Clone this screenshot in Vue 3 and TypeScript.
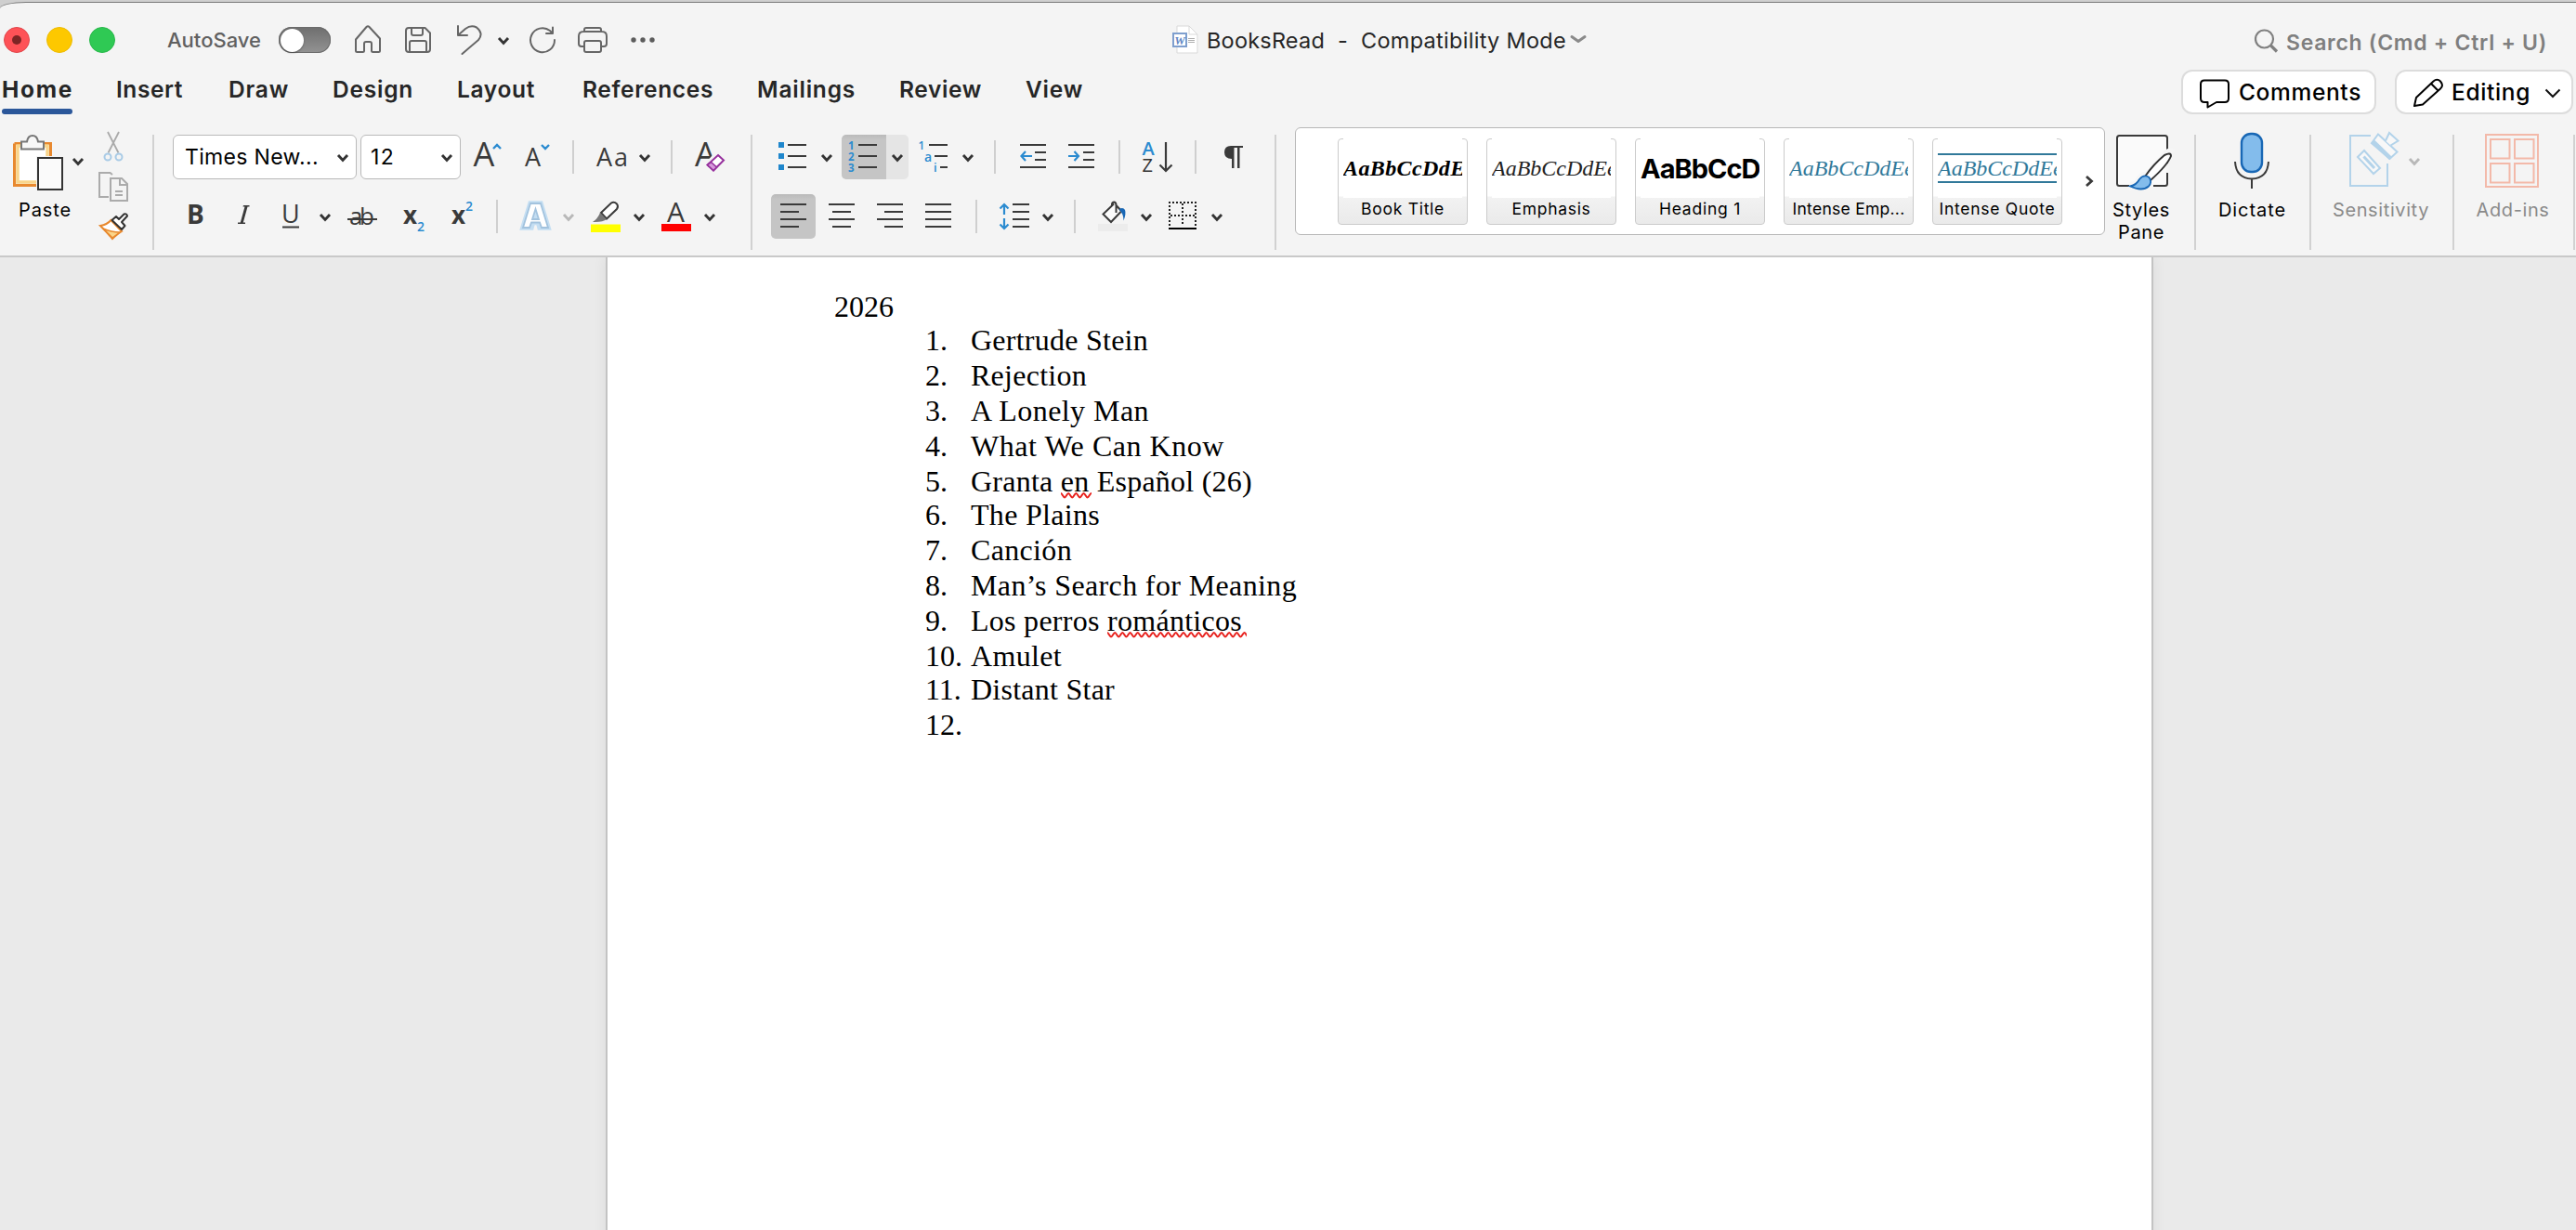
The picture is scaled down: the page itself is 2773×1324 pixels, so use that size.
<script setup lang="ts">
import { h, type FunctionalComponent, type Directive } from 'vue'

// Icon tile: all icons of one toolbar share a coordinate space, each tile shows a slice of it.
const Ic: FunctionalComponent<{ x: number; w: number; y?: number; t?: number }> = (p, { slots }) =>
  h(
    'svg',
    {
      width: p.w,
      height: p.t ?? 48,
      viewBox: `${p.x} ${p.y ?? 145} ${p.w} ${p.t ?? 48}`,
      fill: 'none',
      stroke: '#3a3a3a',
      'stroke-width': 2,
      style: { display: 'block', flex: 'none', overflow: 'visible' },
    },
    slots.default?.(),
  )
Ic.props = ['x', 'w', 'y', 't']

const Chev: FunctionalComponent<{ x: number; y: number; c?: string }> = (p) =>
  h('path', {
    d: `M${p.x - 5} ${p.y - 3}l5 5.4l5 -5.4`,
    stroke: p.c ?? '#333',
    'stroke-width': 2.9,
    fill: 'none',
  })
Chev.props = ['x', 'y', 'c']

// Tracks a label so that it takes up exactly the given width.
const vFit: Directive<HTMLElement, number> = {
  mounted(el, b) {
    const n = (el.textContent ?? '').length
    const w = el.getBoundingClientRect().width
    if (n) el.style.letterSpacing = `${((b.value - w) / n).toFixed(3)}px`
  },
}

const tabs = [
  { name: 'Home', slot: 123, w: 77 },
  { name: 'Insert', slot: 121, w: 72 },
  { name: 'Draw', slot: 112, w: 65 },
  { name: 'Design', slot: 134, w: 87 },
  { name: 'Layout', slot: 135, w: 84 },
  { name: 'References', slot: 188, w: 141 },
  { name: 'Mailings', slot: 153, w: 106 },
  { name: 'Review', slot: 136, w: 89 },
  { name: 'View', slot: 70, w: 62 },
]

const styles = [
  { name: 'Book Title', sample: 'AaBbCcDdEe', cls: 'book', w: 90 },
  { name: 'Emphasis', sample: 'AaBbCcDdEe', cls: 'emph', w: 85 },
  { name: 'Heading 1', sample: 'AaBbCcDd', cls: 'head', w: 88 },
  { name: 'Intense Emp...', sample: 'AaBbCcDdEe', cls: 'iemp', w: 121 },
  { name: 'Intense Quote', sample: 'AaBbCcDdEe', cls: 'iquo', w: 125 },
]

interface Book { pre: string; bad?: string; post?: string; wave?: number; tight?: boolean; w: number }
const books: Book[] = [
  { pre: 'Gertrude Stein', tight: true, w: 191 },
  { pre: 'Rejection', w: 125 },
  { pre: 'A Lonely Man', w: 192 },
  { pre: 'What We Can Know', w: 273 },
  { pre: 'Granta ', bad: 'en', post: ' Español (26)', wave: 33, w: 303 },
  { pre: 'The Plains', tight: true, w: 139 },
  { pre: 'Canción', w: 109 },
  { pre: 'Man’s Search for Meaning', w: 351 },
  { pre: 'Los perros ', bad: 'románticos', wave: 150, w: 292 },
  { pre: 'Amulet', w: 98 },
  { pre: 'Distant Star', tight: true, w: 155 },
  { pre: '', w: 0 },
]
const wave = (w: number) => {
  let d = 'M0 1'
  for (let x = 0; x < w; x += 8.2) d += 'c1.4 0 2.6 4.4 4.1 4.4c1.4 0 2.6 -4.4 4.1 -4.4'
  return d
}
</script>

<template>
  <div class="desk">
    <div class="window">
      <header class="title">
        <i class="light red"><b></b></i><i class="light yel"></i><i class="light grn"></i>
        <span class="auto"><span v-fit="101">AutoSave</span></span>
        <span class="toggle"><b></b></span>
        <Ic class="quick" :x="376" :w="340" :y="19">
          <g stroke="#666" stroke-width="2" stroke-linejoin="round" stroke-linecap="round">
            <path d="M383 42.500L394.500 29Q396 27.500 397.500 29L409 41.500V54.500Q409 56 407.500 56H401.500Q400 56 400 54.500V47Q400 45 398 45H394Q392 45 392 47V54.500Q392 56 390.500 56H384.500Q383 56 383 54.500Z" />
            <path d="M440 30H457.500L463 35.500V53Q463 56 460 56H440Q437 56 437 53V33Q437 30 440 30ZM443 30V36Q443 38 445 38H453Q455 38 455 36V30M441 56V46Q441 44 443 44H457Q459 44 459 46V56" />
            <path d="M493 28V38H503M493.500 37.500L501 31Q507 26.500 513 29.500Q521 36 515 43L497.500 58" />
            <path d="M597 43A13 13 0 1 1 592 33L595 36M595 29.500V36H588" />
            <path d="M629 50H626Q623 50 623 47V39Q623 34 628 34H648Q653 34 653 39V47Q653 50 650 50H647M629 34V32Q629 30 631 30H645Q647 30 647 32V34M631 44H645Q647 44 647 46V54Q647 56 645 56H631Q629 56 629 54V46Q629 44 631 44Z" />
          </g>
          <Chev :x="542" :y="44" />
          <g fill="#5c5c5c" stroke="none"><circle cx="682" cy="43" r="2.700" /><circle cx="692" cy="43" r="2.700" /><circle cx="702" cy="43" r="2.700" /></g>
        </Ic>
        <Ic class="docicon" :x="1258" :w="41" :y="19">
          <path d="M1267 28H1280L1289 37V57H1267Z" fill="#fff" stroke="#d9d9d9" stroke-width="1" />
          <path d="M1280 28V37H1289" stroke="#d9d9d9" stroke-width="1" />
          <path d="M1279 41.500H1286M1279 43.500H1286M1279 45.500H1286" stroke="#999" stroke-width=".8" />
          <rect x="1263" y="36" width="14" height="14" fill="#fff" stroke="#7f9fce" />
          <text x="1270" y="47.500" text-anchor="middle" fill="#5f86c4" stroke="none" font-family="Liberation Serif, serif" font-style="italic" font-weight="700" font-size="13">W</text>
        </Ic>
        <span class="name"><span v-fit="127">BooksRead</span></span>
        <span class="dash">-</span>
        <span class="mode"><span v-fit="221">Compatibility Mode</span></span>
        <Ic :x="1688" :w="22" :y="19"><path d="M1692 39.500L1699 44.500L1706 39.500" stroke="#8a8a8a" stroke-width="3" stroke-linejoin="round" stroke-linecap="round" /></Ic>
        <span class="search">
          <Ic :x="2425" :w="36" :y="22.5">
            <circle cx="2437.500" cy="42.500" r="9.500" stroke="#808080" stroke-width="2.200" />
            <path d="M2444.500 49.500L2451 56" stroke="#808080" stroke-width="3.200" />
          </Ic>
          <span v-fit="281">Search (Cmd + Ctrl + U)</span>
        </span>
      </header>

      <nav class="tabs">
        <div v-for="(t, i) in tabs" :key="t.name" class="tab" :class="{ on: i === 0 }" :style="{ width: t.slot + 'px' }">
          <span v-fit="t.w">{{ t.name }}</span>
          <i v-if="i === 0" class="bar"></i>
        </div>
        <button class="pill comments">
          <Ic :x="2364" :w="46" :y="75" :t="44">
            <path d="M2373 84.500H2395Q2399 84.500 2399 88.500V104Q2399 108 2395 108H2386L2376.500 113.500V108H2373Q2369 108 2369 104V88.500Q2369 84.500 2373 84.500Z" stroke="#000" stroke-linejoin="round" />
          </Ic>
          <span v-fit="132">Comments</span>
        </button>
        <button class="pill editing">
          <Ic :x="2592" :w="47" :y="75" :t="44">
            <path d="M2599 112L2601 103L2619.500 85.500Q2623.500 82 2627 85.500Q2631 90 2627 93.500L2608 110.500ZM2617 88L2625 96" stroke="#000" stroke-linejoin="round" />
          </Ic>
          <span v-fit="85">Editing</span>
          <Ic :x="2734" :w="26" :y="75" :t="44"><path d="M2740.500 94.500L2748 102L2755.500 94.500" stroke="#111" /></Ic>
        </button>
      </nav>

      <section class="ribbon">
        <div class="group clip">
          <div class="big paste">
            <Ic :x="0" :w="94" :y="140" :t="70">
              <path d="M15.500 154.500H54.500V168M39 199.500H15.500V154.500" stroke="#e8892f" stroke-width="3" />
              <path d="M19 157H51V170H41V196H19Z" fill="#fff" stroke="#f9d58b" stroke-width="3.500" />
              <path d="M23 160.500V152.500H29Q30 146 35 146Q40 146 41 152.500H47V160.500Z" fill="#f7f7f7" stroke="#777" />
              <rect x="39" y="168" width="30" height="38" fill="#f4f4f4" stroke="none" />
              <rect x="41" y="170" width="26" height="34" fill="#fafafa" stroke="#333" />
              <Chev :x="84" :y="174" />
            </Ic>
            <span class="lbl"><span v-fit="57">Paste</span></span>
          </div>
          <Ic :x="94" :w="70" :y="140" :t="125">
            <path d="M116 142L127.500 164.500M128 142L116.500 164.500" stroke="#aaa" stroke-width="1.800" />
            <circle cx="116" cy="169" r="3.500" stroke="#a9cbe6" /><circle cx="128" cy="169" r="3.500" stroke="#a9cbe6" />
            <g stroke="#ababab"><path d="M121 188L118.500 186H107V212H117M119 192H131L137 198V216H119ZM129 192V199H137M124 206H132M124 210H132" /></g>
            <path d="M108 243Q115 242 119.500 237L131 249Q126 252 121 257Q115 250 108 243Z" fill="#fff" stroke="#e8892f" />
            <path d="M111 246Q120 250 129 250L121 256Z" fill="#fbd58a" stroke="#e8892f" stroke-width="1.500" />
            <path d="M120.500 237L125 233L128 236L133.500 230.500Q136.500 229.500 137 232.500L131 239L134.500 243L131 247Z" fill="#fff" stroke="#333" stroke-linejoin="round" />
          </Ic>
        </div>
        <i class="rule"></i>
        <div class="group font">
          <div class="row">
            <div class="box family"><span v-fit="144">Times New...</span><Ic :x="360" :w="23" :y="146" :t="46"><Chev :x="369" :y="170" /></Ic></div>
            <div class="box size"><span v-fit="26">12</span><Ic :x="472" :w="23" :y="146" :t="46"><Chev :x="481" :y="170" /></Ic></div>
            <Ic :x="496" :w="312" class="glyph">
              <g fill="#3a3a3a" stroke="none">
                <text x="509.500" y="179" font-size="36" textLength="23">A</text>
                <text x="565" y="179" font-size="27" textLength="18">A</text>
                <text x="642" y="179" font-size="27" textLength="34">Aa</text>
                <text x="748" y="179" font-size="36" textLength="21">A</text>
              </g>
              <path d="M531 160L535 156L539 160M583 156L587 160L591 156" stroke="#2b8bd0" stroke-width="2.400" />
              <path d="M617 151V187M723 151V187" stroke="#cfcfcf" />
              <Chev :x="694" :y="170" />
              <path d="M772 166L779 172.500L768 184L761.500 177.500Z" fill="#f4f4f4" stroke="#f4f4f4" stroke-width="6" />
              <path d="M773 167L779 172.500L768 183.500L761.500 177.500Z" fill="#fff" stroke="#96309d" />
              <path d="M765.500 174.500L771.500 180L768 183.500L761.500 177.500Z" fill="#d69adb" stroke="#96309d" stroke-width="1.600" />
            </Ic>
          </div>
          <div class="row">
            <Ic :x="186" :w="622" :y="209" class="glyph">
              <g fill="#3a3a3a" stroke="none">
                <text x="201" y="241" font-size="28" font-weight="700">B</text>
                <path d="M262 221H268.500V222.500H266.500L261.800 239.500H264V241H256V239.500H258.800L263.500 222.500H261.500Z" />
                <text x="303" y="240" font-size="27" textLength="20">U</text>
                <text x="376" y="242" font-size="26" textLength="27">ab</text>
                <text x="434" y="241" font-size="26" font-weight="700">x</text>
                <text x="486" y="241" font-size="26" font-weight="700">x</text>
                <text x="718" y="239" font-size="30">A</text>
              </g>
              <path d="M304 244.500H322M374 236H406" />
              <g fill="#2b8bd0" stroke="none" font-size="14" font-weight="600"><text x="449" y="248.500">2</text><text x="501" y="227">2</text></g>
              <path d="M535 215V251" stroke="#cfcfcf" />
              <path d="M571 219H582L590 245H581L579.500 239.500H573.500L572 245H563ZM576.500 227L574.500 235H578.500Z" fill="#fff" stroke="#c4def2" stroke-width="5.500" />
              <path d="M571 219H582L590 245H583L581 239.500H572L570 245H563ZM576.500 225L573 236H580Z" fill="#fff" stroke="#a3c3de" stroke-width="1.800" />
              <Chev :x="350" :y="234" /><Chev :x="612" :y="234" c="#b8b8b8" /><Chev :x="688" :y="234" /><Chev :x="764" :y="234" />
              <path d="M647 229L658 218.500Q661 216.500 664 219.500Q666 222 664 225L653 235.500Z" fill="#fff" stroke="#3a3a3a" />
              <path d="M646 229L653 236Q649 239.500 638 239Q643 236 646 229Z" fill="#777" stroke="none" />
              <rect x="636" y="241.500" width="32" height="8.500" fill="#ff0" stroke="none" />
              <rect x="712" y="241" width="32" height="8" fill="#f00" stroke="none" />
            </Ic>
          </div>
        </div>
        <i class="rule"></i>
        <div class="group para">
          <div class="row">
            <Ic :x="810" :w="96">
              <path d="M838 153h6v6h-6zM838 165h6v6h-6zM838 177h6v6h-6z" fill="#1e86cc" stroke="none" />
              <path d="M848 156H868M848 168H868M848 180H868" /><Chev :x="890" :y="170" />
            </Ic>
            <div class="split">
              <Ic :x="906" :w="48" class="dark glyph">
                <g fill="#2b8bd0" stroke="none" font-size="11.500" font-weight="700"><text x="913" y="161">1</text><text x="913" y="173">2</text><text x="913" y="185">3</text></g>
                <path d="M924 156H944M924 168H944M924 180H944" />
              </Ic>
              <Ic :x="954" :w="24"><Chev :x="966" :y="170" /></Ic>
            </div>
            <Ic :x="978" :w="394" class="glyph">
              <g fill="#2b8bd0" stroke="none" font-weight="600"><text x="988.500" y="161" font-size="12">1</text><text x="995" y="173.500" font-size="14">a</text><text x="1005" y="185" font-size="13">i</text></g>
              <path d="M1000 156H1020M1006 168H1020M1012 180H1020" /><Chev :x="1042" :y="170" />
              <path d="M1071 151V187M1205 151V187M1287 151V187" stroke="#cfcfcf" />
              <path d="M1098 156H1126M1114 164H1126M1114 172H1126M1098 180H1126M1150 156H1178M1166 164H1178M1166 172H1178M1150 180H1178" />
              <path d="M1111 168H1100M1104 163L1099.500 168L1104 173M1150 168H1161M1156.500 163L1161 168L1156.500 173" stroke="#2b8bd0" stroke-width="2.200" />
              <g stroke="none"><text x="1229.500" y="167" font-size="20" font-weight="600" fill="#2b8bd0" textLength="15">A</text><text x="1229.500" y="185" font-size="20" fill="#333" textLength="13">Z</text></g>
              <path d="M1255 153V183M1248.500 177.500L1255 184L1261.500 177.500" stroke-width="2.200" />
              <path d="M1338 157H1325Q1318 157 1318 164Q1318 171 1326 171V181H1328.500V159H1332V181H1334.500V159H1338Z" fill="#3a3a3a" stroke="none" />
            </Ic>
          </div>
          <div class="row r2">
            <div class="pressed"><Ic :x="830" :w="48" :y="209"><path d="M840 220H868M840 228H860M840 236H868M840 244H860" /></Ic></div>
            <Ic :x="878" :w="494" :y="209">
              <path d="M892 220H920M896 228H916M892 236H920M896 244H916M944 220H972M952 228H972M944 236H972M952 244H972M996 220H1024M996 228H1024M996 236H1024M996 244H1024M1090 220H1108M1090 228H1108M1090 236H1108M1090 244H1108" />
              <path d="M1051 215V251M1157 215V251" stroke="#cfcfcf" />
              <path d="M1081 231V220M1076.500 224.500L1081 220L1085.500 224.500M1081 235V246M1076.500 241.500L1081 246L1085.500 241.500" stroke="#2b8bd0" stroke-width="2.200" />
              <path d="M1206.500 228L1196 239L1187.500 230.500L1199 219.500" fill="#fbfbfb" />
              <path d="M1197 222V220Q1197 217.500 1199.500 217.500Q1201.500 218 1201.500 221V229M1201.500 221L1208 228" />
              <path d="M1205 225Q1209 222.500 1211 226Q1212.500 230 1209.500 237.500Q1209.500 230 1205 226Z" fill="#1867b5" stroke="none" />
              <rect x="1182" y="241" width="32" height="8" fill="#ececec" stroke="none" />
              <path d="M1258 218H1288M1259 217V243M1287 217V243M1273 219V243M1260 232H1288" stroke="#222" stroke-dasharray="2 2" />
              <path d="M1258 246H1288" stroke="#000" />
              <Chev :x="1128" :y="234" /><Chev :x="1234" :y="234" /><Chev :x="1310" :y="234" />
            </Ic>
          </div>
        </div>
        <i class="rule"></i>
        <div class="group stylesgroup">
          <div class="gallery">
            <div v-for="s in styles" :key="s.name" class="card">
              <div class="sample" :class="s.cls"><span>{{ s.sample }}</span></div>
              <div class="cap"><span v-fit="s.w">{{ s.name }}</span></div>
            </div>
            <Ic :x="2228" :w="30" :y="138" :t="114"><path d="M2246 190L2251.500 195L2246 200" stroke-width="2.800" /></Ic>
          </div>
          <div class="big pane">
            <Ic :x="2270" :w="76" :y="140" :t="70">
              <rect x="2279" y="146" width="54" height="54" rx="2.500" fill="#fafafa" />
              <path d="M2338 165Q2336 162 2331 168L2312 189Q2305 189 2303 195Q2300 201 2292 200" stroke="#f6f6f6" stroke-width="9" />
              <path d="M2333 176V186M2312 200H2318" stroke="#f6f6f6" stroke-width="3" />
              <path d="M2309 190Q2318 177 2330 167Q2337 163.500 2337 168Q2333 178 2315 194Z" fill="#fff" stroke="#333" />
              <path d="M2293 200.500Q2300 199 2303 193Q2308 187 2313.500 191Q2317 196 2313 200.500Q2306 206.500 2293 200.500Z" fill="#83bcec" stroke="#1867b5" stroke-width="1.800" />
            </Ic>
            <span class="lbl"><span v-fit="62">Styles</span></span>
            <span class="lbl two"><span v-fit="50">Pane</span></span>
          </div>
        </div>
        <i class="rule"></i>
        <div class="group big dict">
          <Ic :x="2364" :w="122" :y="140" :t="70">
            <rect x="2413" y="144" width="22" height="41" rx="10" fill="#83bcec" stroke="#1867b5" stroke-width="2.400" />
            <path d="M2406 174Q2407 192 2424 192.500Q2441 192 2442 174M2424 192V203" />
          </Ic>
          <span class="lbl"><span v-fit="73">Dictate</span></span>
        </div>
        <i class="rule"></i>
        <div class="group big off">
          <Ic :x="2488" :w="152" :y="140" :t="70">
            <g stroke="#b3d3ea">
              <path d="M2552 146H2530V200H2570V176" fill="none" />
              <path d="M2538 169L2545 162L2562 181L2555 187Z" fill="#f8f8f8" />
              <path d="M2544.500 168.500L2556 181" stroke-width="3" />
              <path d="M2553 154L2560 144.500L2580.500 163.500L2572.500 171Z" fill="#f8f8f8" />
              <path d="M2552.500 154L2556.500 151L2575 169L2572 172Z" fill="#b3d3ea" stroke="none" />
              <path d="M2568 151.500L2572 143L2581.500 151.500L2573.500 156.500" fill="#f8f8f8" />
            </g>
            <Chev :x="2599" :y="174" c="#b8b8b8" />
          </Ic>
          <span class="lbl"><span v-fit="104">Sensitivity</span></span>
        </div>
        <i class="rule"></i>
        <div class="group big off addins">
          <Ic :x="2642" :w="128" :y="140" :t="70">
            <rect x="2676" y="145" width="56" height="56" stroke="#f3b9a9" />
            <path d="M2681 150h20.500v20.500h-20.500zM2707 150h20.500v20.500h-20.500zM2681 176h20.500v20.500h-20.500zM2707 176h20.500v20.500h-20.500z" stroke="#f3b9a9" />
          </Ic>
          <span class="lbl"><span v-fit="79">Add-ins</span></span>
        </div>
        <i class="rule"></i>
      </section>

      <main class="canvas">
        <article class="page">
          <p class="year">2026</p>
          <div v-for="(b, i) in books" :key="i" class="line" :class="{ tight: b.tight }">
            <span class="num" :class="{ wide: i > 8 }">{{ i + 1 }}.</span>
            <span v-fit="b.w" class="book-name">{{ b.pre }}<span v-if="b.bad" class="bad">{{ b.bad }}<svg class="wave" :width="b.wave" height="7"><path :d="wave(b.wave ?? 0)" fill="none" stroke="#e8211d" stroke-width="2" /></svg></span>{{ b.post }}</span>
          </div>
        </article>
      </main>
    </div>
  </div>
</template>

<style>
body { margin: 0; background: #cfcfcf; overflow: hidden; }
</style>

<style scoped>
.desk { width: 2773px; height: 1324px; padding-top: 2px; box-sizing: border-box; background: #cfcfcf; overflow: hidden; font-family: Inter, 'Liberation Sans', sans-serif; color: #262626; }
.window { height: 1322px; box-sizing: border-box; border-top: 1px solid #7b7b7b; border-top-left-radius: 28px 7px; background: #f4f4f4; overflow: hidden; display: flex; flex-direction: column; }
span { white-space: pre; display: inline-block; }
i { display: block; flex: none; }

.title { height: 72px; padding: 8px 0 0 4px; box-sizing: border-box; display: flex; align-items: center; flex: none; }
.light { width: 28px; height: 28px; border-radius: 50%; margin-right: 18px; display: flex; align-items: center; justify-content: center; box-sizing: border-box; }
.light b { width: 10px; height: 10px; border-radius: 50%; background: #7d2525; }
.red { background: #fe5257; border: 1px solid #e0464b; }
.yel { background: #fdc800; border: 1px solid #edbb00; }
.grn { background: #2fc954; border: 1px solid #28b84a; }
.auto { width: 120px; margin-left: 38px; font-size: 22px; font-weight: 500; color: #616161; }
.toggle { width: 56px; height: 28px; border-radius: 14px; background: linear-gradient(#6e6e6e, #939393); margin-right: 20px; box-shadow: inset 0 0 0 1px #6b6b6b; }
.toggle b { display: block; width: 25px; height: 25px; margin: 1.500px 0 0 2px; border-radius: 50%; background: #fff; box-shadow: 0 1px 2px rgba(0, 0, 0, .35); }
.docicon { margin-left: 542px; }
.name, .mode, .dash { font-size: 23.500px; font-weight: 400; line-height: 30px; padding-top: 1px; }
.name { width: 140px; }
.dash { width: 25px; margin-left: 1px; }
.mode { width: 224px; margin-right: -1px; }
.search { display: flex; align-items: center; margin-left: 715px; padding-top: 6px; font-size: 23px; font-weight: 600; color: #7f7f7f; }

.tabs { height: 55px; display: flex; padding-left: 2px; flex: none; font-size: 24.500px; font-weight: 600; line-height: 24px; }
.tab { padding-top: 9px; box-sizing: border-box; flex: none; }
.tab.on { font-weight: 700; }
.tab > span { display: table; }
.bar { width: 76px; height: 6px; margin: 9px 0 0; border-radius: 3px; background: #2b579a; }
.pill { height: 48px; box-sizing: border-box; border: 2px solid #dcdcdc; border-radius: 12px; background: #fff; padding: 0; display: flex; align-items: center; font: 500 24.500px/30px Inter, sans-serif; color: #000; flex: none; }
.comments { width: 210px; margin-left: 1174px; padding-left: 14px; }
.editing { width: 192px; margin-left: 20px; padding-left: 12px; }
.editing > span { margin-right: 10px; }

.ribbon { height: 147px; padding-top: 15px; box-sizing: border-box; border-bottom: 2px solid #c9c9c9; display: flex; flex: none; }
.rule { width: 2px; height: 124px; background: #d1d1d1; }
.group { flex: none; height: 124px; }
.clip { width: 164px; display: flex; }
.clip > svg, .big > svg { margin-top: -5px; }
.big { display: flex; flex-direction: column; align-items: center; }
.lbl { font-size: 20px; line-height: 24px; margin-top: 4px; font-weight: 400; color: #000; }
.lbl > span { display: table; }
.lbl.two { margin-top: 0; }
.off .lbl { color: #8a8a8a; margin-right: 2px; }
.paste { width: 94px; }
.paste .lbl { margin-left: 3px; }
.font { width: 642px; }
.row { display: flex; height: 48px; margin-bottom: 16px; }
.font .row { padding-left: 20px; }
.glyph { font-family: 'Open Sans', 'Noto Sans', sans-serif; }
.box { height: 48px; box-sizing: border-box; border: 1px solid #b9b9b9; border-radius: 6px; background: #fff; font-size: 23px; line-height: 46px; font-weight: 400; color: #000; display: flex; justify-content: space-between; }
.family { width: 198px; margin-right: 4px; padding-left: 12px; }
.size { width: 108px; padding-left: 10px; }
.para { width: 562px; }
.para .r2 { padding-left: 20px; }
.split { display: flex; border-radius: 5px; overflow: hidden; background: #e5e5e5; }
.dark, .pressed { background: linear-gradient(#bababa, #c5c5c5 12%, #c5c5c5); }
.pressed { width: 48px; height: 48px; border-radius: 5px; }
.stylesgroup { width: 988px; display: flex; }
.gallery { width: 872px; height: 116px; box-sizing: border-box; margin: -8px 0 0 20px; border: 1px solid #b7b7b7; border-radius: 6px; background: #fff; display: flex; padding-left: 45px; }
.card { width: 140px; height: 93px; margin: 11px 20px 0 0; box-sizing: border-box; border: 1px solid #cbcbcb; border-radius: 4px; background: linear-gradient(#fff 61px, #f2f2f2 62px, #eaeaea); flex: none; display: flex; flex-direction: column; align-items: center; }
.card:nth-child(5) { margin-right: 8px; }
.sample { width: 128px; height: 64px; margin-top: -1px; overflow: hidden; background: #fff; font: italic 24px/32px 'Liberation Serif', serif; color: #222; padding-top: 16px; box-sizing: border-box; flex: none; }
.book { font-weight: 700; letter-spacing: .4px; color: #000; }
.head { font: 700 29px/34px Inter, sans-serif; letter-spacing: -1px; color: #000; }
.iemp, .iquo { color: #31799a; }
.iquo span { display: block; height: 28px; line-height: 28px; border-top: 2px solid #31799a; border-bottom: 2px solid #31799a; }
.cap { font-size: 17.500px; line-height: 24px; font-weight: 400; color: #000; }
.cap > span { display: table; }
.pane { width: 76px; margin-left: 4px; }
.pane .lbl { margin-right: 6px; }
.dict { width: 122px; }
.dict .lbl { margin-right: 1px; }
.off { width: 152px; }
.addins { width: 128px; }

.canvas { flex: 1; background: #eaeaea; padding-left: 652px; overflow: hidden; }
.page { width: 1662px; height: 1060px; border: solid #c3c3c3; border-width: 0 2px; background: #fff; box-shadow: 0 0 14px rgba(0, 0, 0, .07); font-family: 'Liberation Serif', serif; font-size: 32px; color: #000; overflow: hidden; }
.year { margin: 34px 0 0 244px; line-height: 38px; height: 38px; }
.line { height: 38px; line-height: 38px; display: flex; padding-left: 342px; }
.line.tight { height: 36px; margin-top: -2px; margin-bottom: 2px; }
.num { width: 49px; flex: none; }
.book-name { position: relative; }
.bad { position: relative; }
.wave { position: absolute; left: 0; top: 31px; }
</style>
